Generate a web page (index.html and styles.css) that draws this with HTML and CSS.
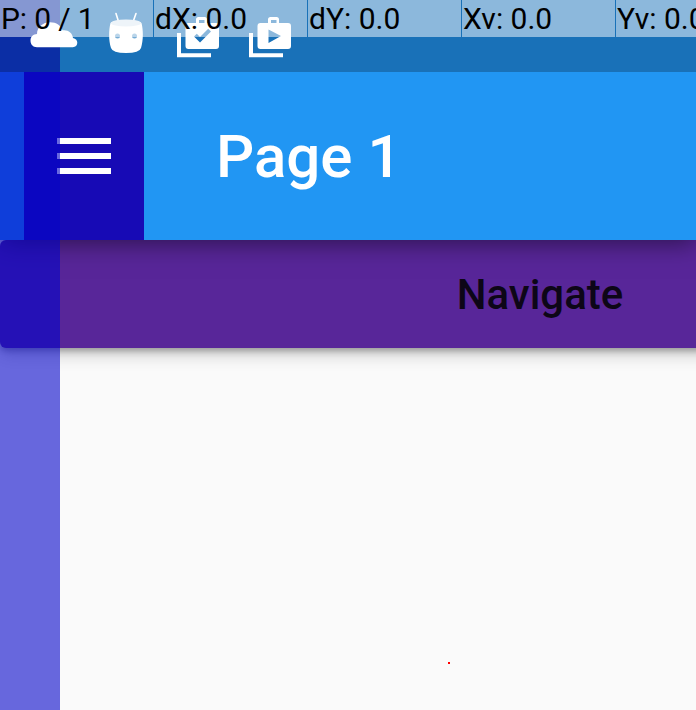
FILE: index.html
```html
<!DOCTYPE html>
<html lang="en">
<head>
<meta charset="utf-8">
<title>Page 1</title>
<link rel="stylesheet" href="styles.css">
</head>
<body>
<div class="screen">
  <header class="app-bar">
    <button class="menu" aria-label="Menu">
      <span class="line"></span><span class="line"></span><span class="line"></span>
    </button>
    <h1 class="title">Page 1</h1>
  </header>
  <main class="content">
    <button class="navigate">Navigate</button>
  </main>
  <div class="drag-edge"></div>
  <div class="status-bar">
    <svg class="cloud" width="48" height="26" viewBox="0 0 48 26"><path fill="#fff" d="M7 25.200C3 25.200.500 22.500.500 18.500C.500 14.500 3.500 12.200 7 12C7 5 13 .200 20 .200C26.500.200 31 3.500 32.500 8.300C38 7.500 42.500 11 43 16C46 16.500 47.300 18.500 47.300 20.800C47.300 23.500 45.500 25.200 42.800 25.200Z"/></svg>
    <svg class="droid" width="36" height="42" viewBox="0 0 36 42"><path d="M8 1.500l2.500 8M28 1.500l-2.800 8" stroke="#fff" stroke-width="1.600" stroke-linecap="round"/><path fill="#fff" d="M2.500 11C6 7 30 7 33.500 11C35.300 18 35.500 28 33 36Q31.500 41 18 41Q4.500 41 3 36C.500 28 .700 18 2.500 11Z"/><ellipse cx="18" cy="11" rx="15" ry="3.600" fill="#dde9f3"/><circle cx="9.500" cy="24" r="2.500" fill="#75abd4"/><circle cx="26.500" cy="24" r="2.500" fill="#75abd4"/></svg>
    <svg class="bag" width="44" height="42" viewBox="0 0 44 42"><path d="M2 17v22.200h32" fill="none" stroke="#fff" stroke-width="4"/><path fill="#fff" fill-rule="evenodd" d="M11.500 7H19V3.500Q19 1 21.500 1h6Q30 1 30 3.500V7h9Q42 7 42 10V30Q42 33 39 33H11.500Q8.500 33 8.500 30V10Q8.500 7 11.500 7ZM22 7h5.500V4h-5.500ZM17 20.500l6 6L34 15.500l-2.800-2.800-8.200 8.200-3.200-3.200Z"/></svg>
    <svg class="bag" width="44" height="42" viewBox="0 0 44 42"><path d="M2 17v22.200h32" fill="none" stroke="#fff" stroke-width="4"/><path fill="#fff" fill-rule="evenodd" d="M11.500 7H19V3.500Q19 1 21.500 1h6Q30 1 30 3.500V7h9Q42 7 42 10V30Q42 33 39 33H11.500Q8.500 33 8.500 30V10Q8.500 7 11.500 7ZM22 7h5.500V4h-5.500ZM19.500 13.500v13.500l12.500-7Z"/></svg>
  </div>
  <div class="pointer-bar">
    <span class="pointers">P: 0 / 1</span><span>dX: 0.0</span><span>dY: 0.0</span><span>Xv: 0.0</span><span>Yv: 0.0</span>
  </div>
  <i class="touch-point"></i>
</div>
</body>
</html>
```
FILE: styles.css
```css
* { box-sizing: border-box; }
body { margin: 0; overflow: hidden; font-family: Roboto, sans-serif; }
button { border: 0; padding: 0; font: inherit; }
.screen {
  position: relative;
  display: flex;
  flex-direction: column;
  height: 710px;
  overflow: hidden;
  background: #fafafa;
}
.app-bar {
  position: relative;
  z-index: 1;
  display: flex;
  align-items: stretch;
  flex: none;
  height: 240px;
  padding: 72px 0 0 24px;
  background: #2196f3;
  box-shadow: 0 3px 24px rgba(0, 0, 0, .5);
}
.menu {
  display: flex;
  flex-direction: column;
  align-items: center;
  justify-content: center;
  gap: 9px;
  width: 120px;
  background: #170ab5;
}
.line { width: 54px; height: 6px; background: #fff; }
.title {
  margin: 0 0 0 72px;
  font-size: 60px;
  font-weight: 500;
  line-height: 170px;
  color: #fff;
}
.content { flex: 1; }
.navigate {
  display: block;
  width: 1080px;
  height: 108px;
  padding-top: 2px;
  border-radius: 6px;
  background: #582699;
  box-shadow: 0 3px 6px rgba(0, 0, 0, .28), 0 6px 18px rgba(0, 0, 0, .2);
  color: #0d0617;
  font-size: 42px;
  font-weight: 500;
  line-height: 106px;
}
.drag-edge {
  position: absolute;
  z-index: 2;
  inset: 0 auto 0 0;
  width: 60px;
  background: rgba(3, 3, 201, .595);
}
.status-bar {
  position: absolute;
  z-index: 3;
  inset: 0 0 auto;
  display: flex;
  align-items: flex-start;
  height: 72px;
  padding-left: 30px;
  background: rgba(0, 0, 0, .245);
}
.cloud { margin-top: 22px; }
.droid { margin: 12px 0 0 30px; }
.bag { margin: 16px 0 0 33px; }
.bag + .bag { margin-left: 28px; }
.pointer-bar {
  position: absolute;
  z-index: 4;
  top: 0;
  left: 0;
  display: flex;
  gap: 1px;
  height: 37px;
}
.pointer-bar span {
  width: 153px;
  padding-left: 1px;
  background: rgba(255, 255, 255, .5);
  color: #000;
  font-size: 30px;
  line-height: 37px;
  white-space: nowrap;
}
.pointer-bar .pointers { letter-spacing: -.15px; }
.touch-point {
  position: absolute;
  top: 662px;
  left: 448px;
  width: 2px;
  height: 2px;
  background: #f00;
}
```
